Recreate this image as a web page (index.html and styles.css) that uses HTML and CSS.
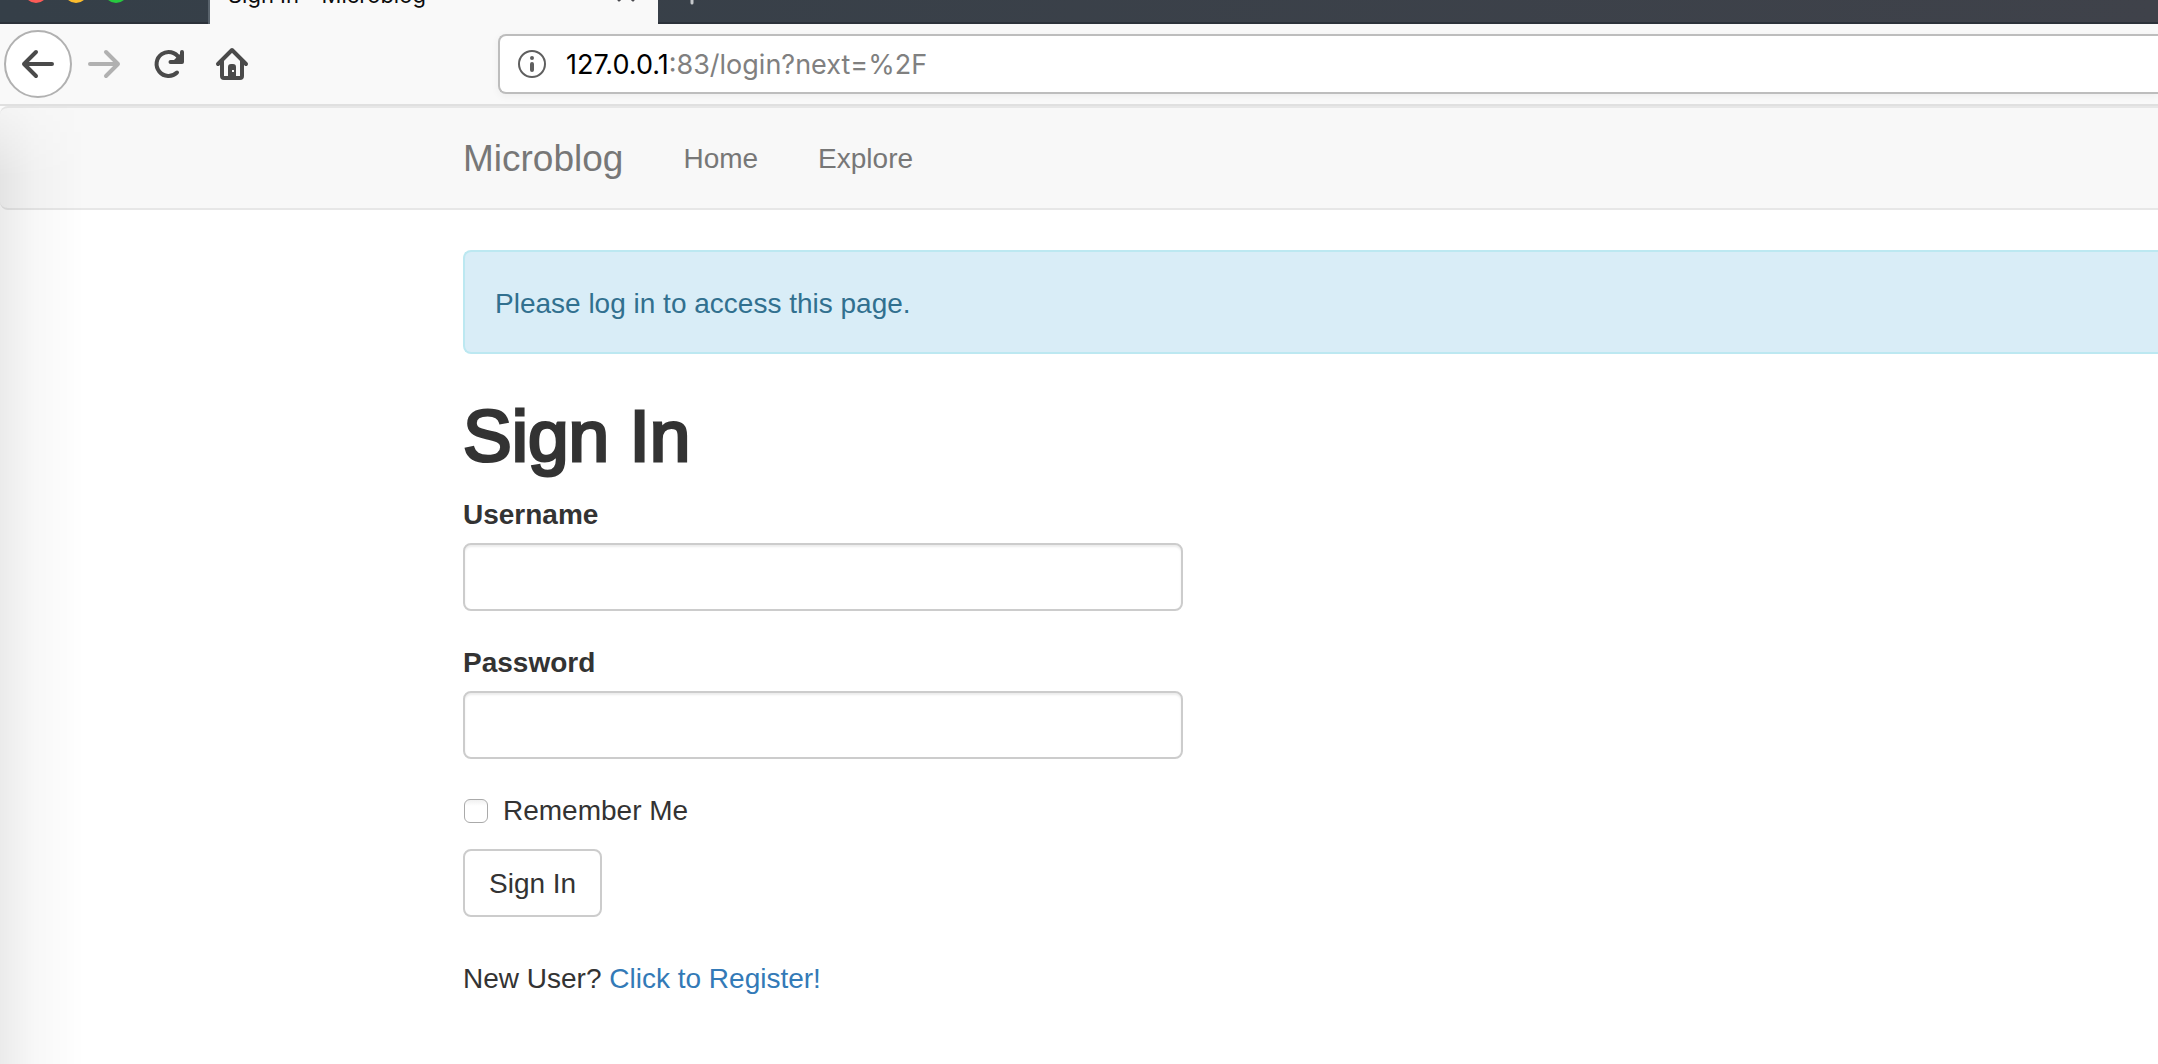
FILE: index.html
```html
<!DOCTYPE html>
<html lang="en">
<head>
<meta charset="utf-8">
<title>Sign In - Microblog</title>
<link rel="stylesheet" href="styles.css">
</head>
<body>
<header class="browser">
  <div class="tab-strip">
    <div class="window-buttons"><span class="dot close"></span><span class="dot minimize"></span><span class="dot maximize"></span></div>
    <div class="tab">
      <span class="tab-title">Sign In - Microblog</span>
      <svg class="tab-close" width="20" height="20" viewBox="0 0 20 20" aria-hidden="true"><path d="M3 3L17 17M17 3L3 17"/></svg>
    </div>
    <svg class="new-tab" width="26" height="26" viewBox="0 0 26 26" aria-hidden="true"><path d="M13 2V24M2 13H24"/></svg>
  </div>
  <div class="toolbar">
    <button class="tool back" type="button" aria-label="Back"><svg width="36" height="36" viewBox="0 0 36 36"><path d="M32 18H4M16 6L4 18L16 30"/></svg></button>
    <button class="tool forward" type="button" aria-label="Forward"><svg width="36" height="36" viewBox="0 0 36 36"><path d="M4 18H32M20 6L32 18L20 30"/></svg></button>
    <button class="tool" type="button" aria-label="Reload"><svg width="36" height="36" viewBox="0 0 36 36"><path d="M27 26.500A12 12 0 1 1 29 12"/><path d="M32 6V16H20.500"/><path class="fill" d="M32 6V16H22Z"/></svg></button>
    <button class="tool" type="button" aria-label="Home"><svg width="36" height="36" viewBox="0 0 36 36"><path d="M4 18L18 4L32 18M8 15V30Q8 32 10 32H26Q28 32 28 30V15"/><path class="door" fill-rule="evenodd" d="M14 32V21Q14 18 17 18H19Q22 18 22 21V32ZM18 24V26H20V24Z"/></svg></button>
    <div class="address">
      <svg width="28" height="28" viewBox="0 0 28 28" aria-hidden="true"><circle cx="14" cy="14" r="13"/><path d="M14 14V20M14 8V8.100"/></svg>
      <span class="url"><span class="host">127.0.0.1</span>:83/login?next=%2F</span>
    </div>
  </div>
</header>
<div class="page">
  <nav class="navbar">
    <a class="brand" href="#">Microblog</a>
    <a class="nav-link" href="#">Home</a>
    <a class="nav-link" href="#">Explore</a>
  </nav>
  <main class="container">
    <div class="alert" role="alert">Please log in to access this page.</div>
    <h1>Sign In</h1>
    <form class="form">
      <div class="group"><label for="username">Username</label><input class="field" id="username" type="text"></div>
      <div class="group"><label for="password">Password</label><input class="field" id="password" type="password"></div>
      <div class="remember"><input id="remember" type="checkbox"><label for="remember">Remember Me</label></div>
      <button class="submit" type="button">Sign In</button>
    </form>
    <p class="register">New User? <a href="#">Click to Register!</a></p>
  </main>
</div>
</body>
</html>
```
FILE: styles.css
```css
* { box-sizing: border-box; }
html, body { height: 100%; }
body {
  margin: 0;
  display: flex;
  flex-direction: column;
  overflow: hidden;
  background: #fff;
  color: #333;
  font: 28px/40px "Helvetica Neue", "Liberation Sans", Arial, sans-serif;
}
button, input { font: inherit; color: inherit; }
a { color: #337ab7; text-decoration: none; }

.browser { flex: none; font-family: Inter, sans-serif; }
.tab-strip {
  display: flex;
  align-items: flex-end;
  height: 24px;
  overflow: hidden;
  background: linear-gradient(#0000 22px, #2c323a 22px), linear-gradient(90deg, #353f48, #3f424a);
}
.window-buttons {
  display: flex;
  gap: 16px;
  width: 210px;
  padding: 0 0 21px 24px;
  border-right: 2px solid #59636c;
}
.dot { width: 24px; height: 24px; border-radius: 50%; }
.close { background: #fc5b57; }
.minimize { background: #fdbd2e; }
.maximize { background: #27c93f; }
.tab {
  display: flex;
  align-items: flex-end;
  justify-content: space-between;
  width: 448px;
  height: 60px;
  padding: 0 22px 16px 18px;
  background: #f9f9f9;
  color: #0c0c0d;
  font-size: 22px;
  line-height: 26px;
}
.tab-close { margin-bottom: 5px; }
.new-tab { margin: 0 0 19px 21px; }
.tab-close, .new-tab { fill: none; stroke: #4a4a4f; stroke-width: 3; stroke-linecap: round; }
.new-tab { stroke: #c5c8cb; }

.toolbar {
  display: flex;
  align-items: center;
  height: 82px;
  padding: 0 0 0 4px;
  border-bottom: 2px solid #e0e0e0;
  background: #f9f9f9;
}
.tool {
  display: grid;
  place-items: center;
  width: 64px;
  height: 64px;
  padding: 0;
  border: 0;
  background: none;
}
.tool svg { fill: none; stroke: #4a4a4a; stroke-width: 4; stroke-linecap: round; stroke-linejoin: round; }
.tool .fill { fill: #4a4a4a; stroke: none; }
.tool .door { fill: #4a4a4a; stroke: none; }
.back { width: 68px; height: 68px; border: 2px solid #b1b1b1; border-radius: 50%; background: #fff; }
.tool.forward svg { stroke: #b1b1b1; }
.address {
  display: flex;
  align-items: center;
  flex: 1;
  gap: 20px;
  height: 60px;
  margin-left: 234px;
  padding-left: 18px;
  border: 2px solid #bdbdbd;
  border-right: 0;
  border-radius: 8px 0 0 8px;
  background: #fff;
  box-shadow: 0 2px 8px #0000000d;
}
.address svg { fill: none; stroke: #5f5f5f; stroke-width: 2; stroke-linecap: round; }
.address path { stroke-width: 4; }
.url { padding-top: 2px; color: #808080; font-size: 27px; }
.host { color: #000; }

.page {
  position: relative;
  flex: 1;
}
/* soft shade along the window's left edge */
.page::before {
  content: "";
  position: absolute;
  inset: 0 auto 0 0;
  width: 84px;
  background: linear-gradient(90deg, #00000014, #00000007 42%, #0000);
  mask-image: linear-gradient(#0003, #000 70px);
  pointer-events: none;
}
.navbar {
  display: flex;
  align-items: center;
  height: 104px;
  margin-bottom: 40px;
  padding: 2px 0 0 463px;
  border: solid #e7e7e7;
  border-width: 2px 0;
  border-radius: 8px 0 0 8px;
  background: #f8f8f8;
}
.navbar a { color: #777; }
.brand { margin-right: 30px; font-size: 37px; }
.nav-link { padding: 0 30px; }
.container { padding-left: 463px; }
.alert {
  padding: 32px 30px 28px;
  border: 2px solid #bce8f1;
  border-right: 0;
  border-radius: 8px 0 0 8px;
  background: #d9edf7;
  color: #31708f;
}
h1 {
  margin: 42px 0 18px;
  font-size: 73px;
  font-weight: 400;
  line-height: 79px;
  -webkit-text-stroke: 3px #333;
}
.form { max-width: 720px; }
.group { display: grid; gap: 8px; margin-bottom: 30px; }
.group label { padding-top: 2px; font-weight: 700; }
.field {
  width: 100%;
  height: 68px;
  padding: 12px 24px;
  border: 2px solid #ccc;
  border-radius: 8px;
  background: #fff;
  box-shadow: inset 0 2px 2px #00000013;
}
.remember { display: flex; align-items: center; gap: 15px; padding-top: 2px; margin-bottom: 18px; }
.remember input {
  appearance: none;
  width: 24px;
  height: 24px;
  margin: 0 0 0 1px;
  border: 1px solid #aaa;
  border-radius: 6px;
  background: linear-gradient(#f0f0f0, #fff 6px);
}
.submit {
  display: block;
  height: 68px;
  padding: 2px 24px 0;
  border: 2px solid #ccc;
  border-radius: 8px;
  background: #fff;
}
.register { margin: 42px 0 0; }
```
